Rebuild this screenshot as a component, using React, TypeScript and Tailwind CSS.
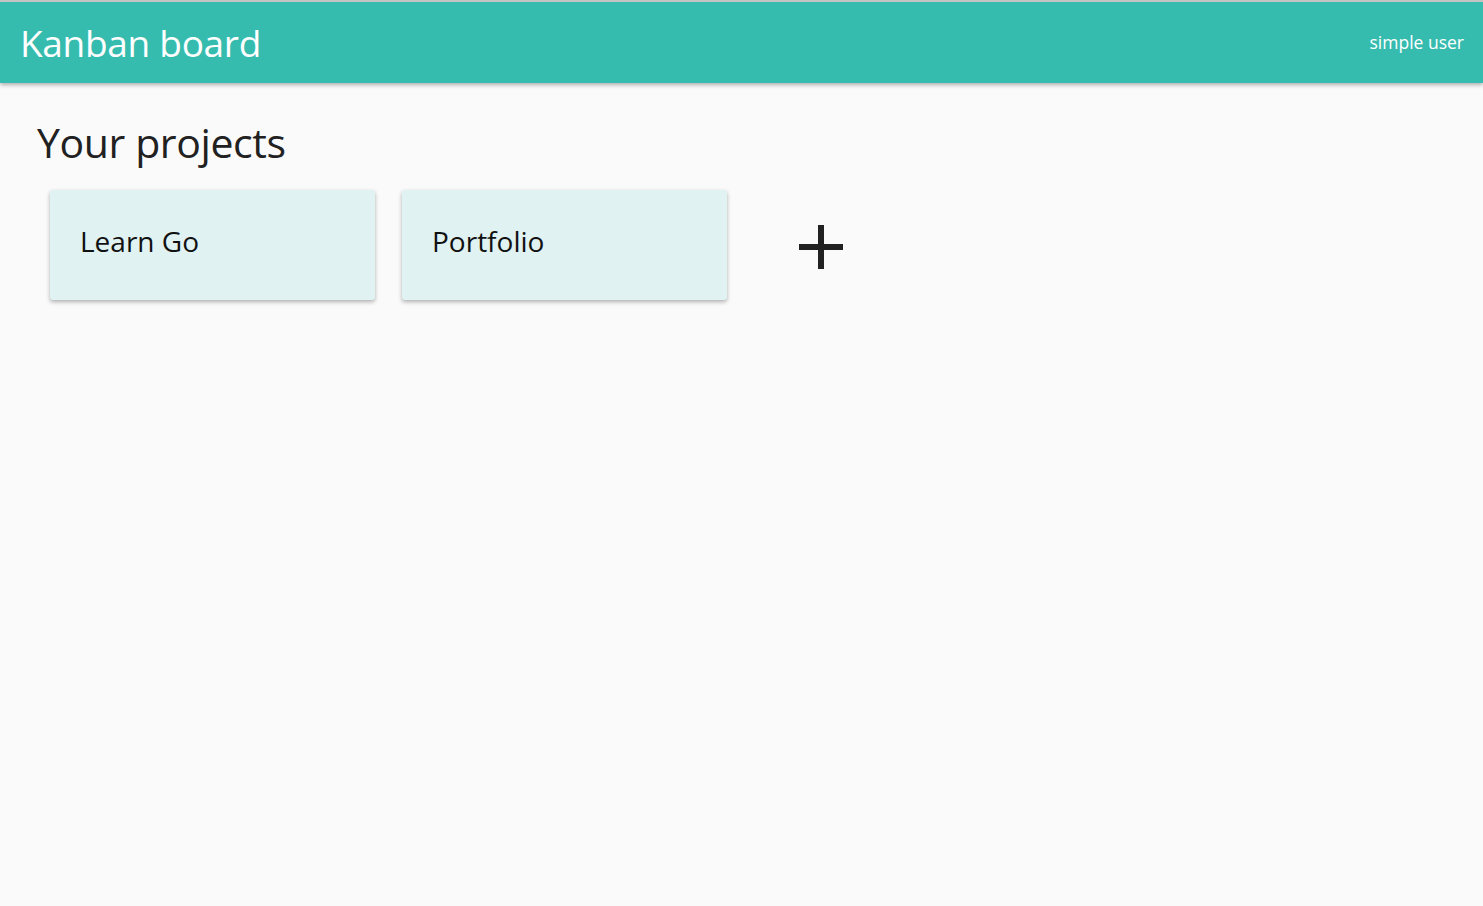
const projects = [{ id: 1, name: "Learn Go" }, { id: 2, name: "Portfolio" }];

function PlusIcon() {
  return (
    <svg width="46" height="46" viewBox="0 0 46 46" className="text-[#212121]">
      <rect x="20" y="1" width="6" height="44" fill="currentColor" />
      <rect x="1" y="20" width="44" height="6" fill="currentColor" />
    </svg>
  );
}

export default function App() {
  return (
    <div className="min-h-[906px] bg-[#fafafa] font-['Open_Sans',sans-serif]">
      <header className="relative z-10 flex h-[83px] items-center justify-between border-t-2 border-[#c4c4c4] bg-[#36bcaf] pl-[20px] pr-[19px] shadow-[0_2px_4px_rgba(0,0,0,0.3)]">
        <h1 className="text-[37px] leading-none tracking-[-0.3px] text-white">Kanban board</h1>
        <span className="text-[17.5px] text-white">simple user</span>
      </header>

      <main className="px-[37px] pt-[35px]">
        <h2 className="text-[41px] leading-[48px] tracking-[-0.4px] text-[#212121]">Your projects</h2>

        <div className="ml-[13px] mt-[24px] flex items-center gap-[27px]">
          {projects.map((project) => (
            <div
              key={project.id}
              className="h-[110px] w-[325px] rounded-[3px] bg-[#e0f2f1] pl-[30px] pt-[31px] shadow-[0_2px_4px_rgba(0,0,0,0.3)]"
            >
              <span className="text-[28px] leading-[40px] text-[#111]">{project.name}</span>
            </div>
          ))}
          <button className="ml-[44px] mt-[4px] flex h-[46px] w-[46px] items-center justify-center">
            <PlusIcon />
          </button>
        </div>
      </main>
    </div>
  );
}
